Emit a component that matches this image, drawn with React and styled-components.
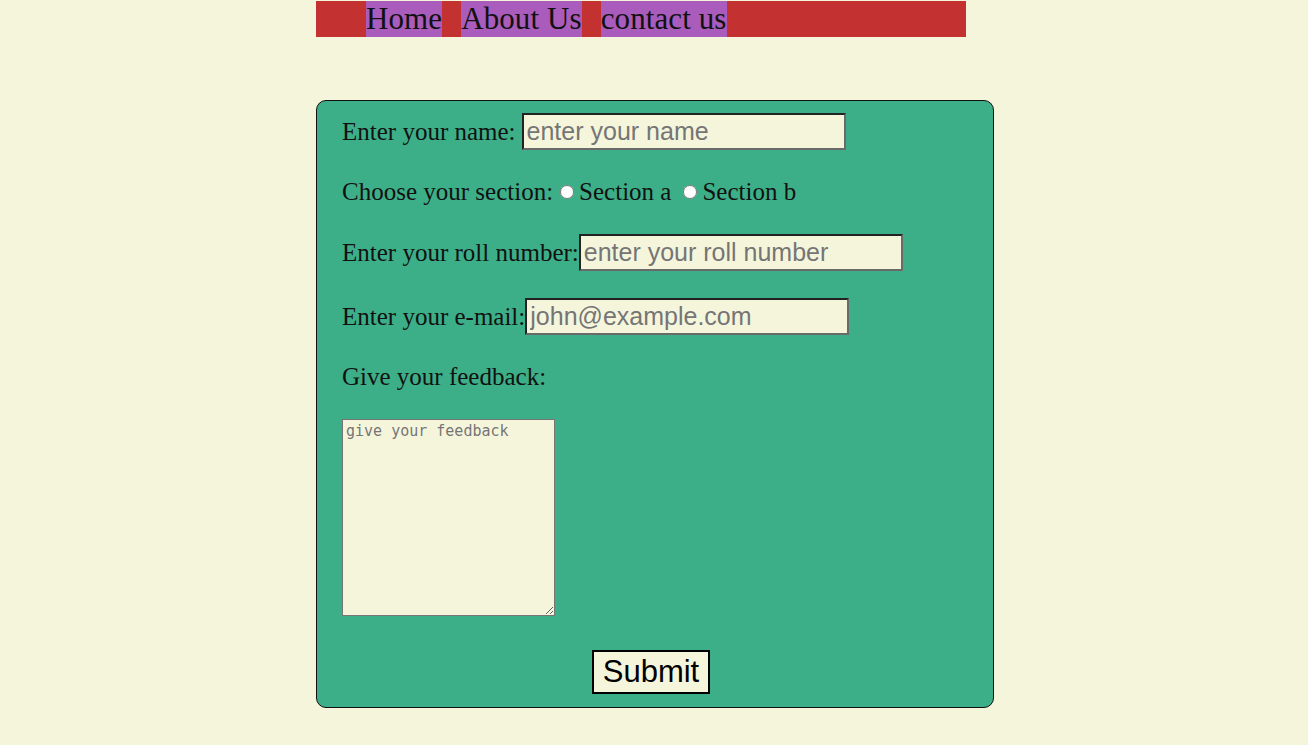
import React from 'react';
import styled, { createGlobalStyle } from 'styled-components';

const GlobalStyle = createGlobalStyle`
  body {
    margin: 0;
    background: #f5f5dc;
    font-family: "Liberation Serif", "Times New Roman", serif;
  }
`;

const Page = styled.div`
  width: 678px;
  margin-left: calc(50% - 338px);
  padding-top: 1px;
`;

const Nav = styled.nav`
  display: flex;
  gap: 19px;
  width: 650px;
  height: 36px;
  padding-left: 50px;
  box-sizing: border-box;
  background: #c33131;
`;

const NavLink = styled.a`
  display: block;
  background: #a95cbc;
  color: #111;
  font-size: 31px;
  letter-spacing: 0.1px;
  line-height: 36px;
  text-decoration: none;
  cursor: pointer;
`;

const Form = styled.form`
  display: flex;
  flex-direction: column;
  gap: 24px;
  margin-top: 63px;
  padding: 12px 25px 13px;
  border: 1px solid #111;
  border-radius: 10px;
  background: #3daf88;
  font-size: 25px;
  color: #111;
`;

const Row = styled.div`
  display: flex;
  align-items: center;
  height: 37px;
  margin-top: ${p => p.shift || 0}px;
`;

const Label = styled.span`
  margin-right: ${p => p.space || 0}px;
  white-space: pre;
`;

const TextInput = styled.input`
  width: 324px;
  height: 37px;
  box-sizing: border-box;
  padding: 1px 3px;
  border: 2px solid;
  border-color: #222 #6a6a6a #6a6a6a #222;
  background: #f5f5dc;
  font-family: "Liberation Sans", Arial, sans-serif;
  font-size: 25px;
  outline: none;
  &::placeholder { color: #757575; }
`;

const Radio = styled.input`
  width: 14px;
  height: 14px;
  margin: 0 5px 0 ${p => p.lead || 0}px;
`;

const Feedback = styled.textarea`
  width: 213px;
  height: 197px;
  box-sizing: border-box;
  padding: 2px 3px;
  border: 1px solid #767676;
  background: #f5f5dc;
  font-family: "DejaVu Sans Mono", monospace;
  font-size: 15px;
  &::placeholder { color: #757575; }
`;

const Submit = styled.button`
  align-self: center;
  margin: 10px 8px 0 0;
  width: 118px;
  height: 44px;
  border: 2px solid #000;
  background: #f5f5dc;
  color: #000;
  font-family: "Liberation Sans", Arial, sans-serif;
  font-size: 31px;
  padding: 0;
`;

export default function App() {
  return (
    <Page>
      <GlobalStyle />
      <Nav>
        <NavLink>Home</NavLink>
        <NavLink>About Us</NavLink>
        <NavLink>contact us</NavLink>
      </Nav>
      <Form onSubmit={e => e.preventDefault()}>
        <Row>
          <Label space={6}>Enter your name:</Label>
          <TextInput placeholder="enter your name" />
        </Row>
        <Row shift={-1}>
          <Label>Choose your section:</Label>
          <Radio type="radio" name="section" lead={7} />
          <Label space={12}>Section a</Label>
          <Radio type="radio" name="section" />
          <Label>Section b</Label>
        </Row>
        <Row>
          <Label>Enter your roll number:</Label>
          <TextInput placeholder="enter your roll number" />
        </Row>
        <Row shift={3}>
          <Label>Enter your e-mail:</Label>
          <TextInput placeholder="john@example.com" />
        </Row>
        <Row shift={-1}>
          <Label>Give your feedback:</Label>
        </Row>
        <Feedback placeholder="give your feedback" />
        <Submit type="submit">Submit</Submit>
      </Form>
    </Page>
  );
}
